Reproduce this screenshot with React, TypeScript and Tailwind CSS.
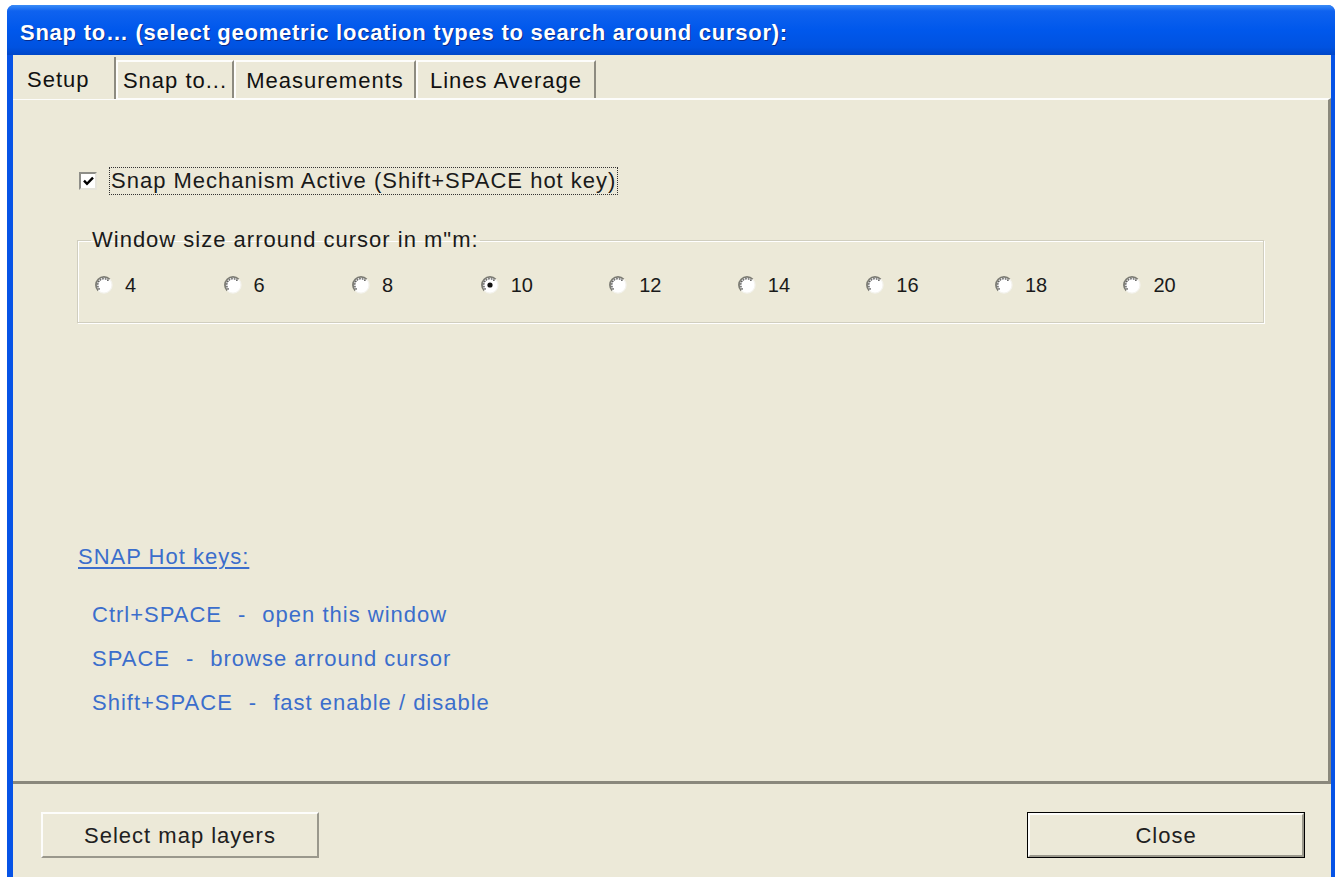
import React, { useState } from 'react';

const SIZES = [4, 6, 8, 10, 12, 14, 16, 18, 20];
const TABS: { label: string; width: string }[] = [
  { label: 'Setup', width: 'w-[103px]' },
  { label: 'Snap to...', width: 'w-[118px]' },
  { label: 'Measurements', width: 'w-[182px]' },
  { label: 'Lines Average', width: 'w-[180px]' },
];

const HOT_KEYS: [string, string][] = [
  ['Ctrl+SPACE', 'open this window'],
  ['SPACE', 'browse arround cursor'],
  ['Shift+SPACE', 'fast enable / disable'],
];

// XP-style radio bullet: white disc with a shaded rim
function Radio({ checked }: { checked: boolean }) {
  return (
    <svg width="18" height="18" viewBox="0 0 18 18" className="shrink-0">
      <circle cx="9" cy="9" r="8" fill="#ffffff" />
      <path d="M3.3 14.7 A8 8 0 0 1 14.7 3.3" fill="none" stroke="#7c7c74" strokeWidth="1.8" />
      <path d="M4.6 13.4 A6.2 6.2 0 0 1 13.4 4.6" fill="none" stroke="#2e2e2e" strokeWidth="1.1" strokeDasharray="1.6 0.9" />
      <path d="M14.7 3.3 A8 8 0 0 1 3.3 14.7" fill="none" stroke="#f4f3ee" strokeWidth="1.2" />
      {checked && <circle cx="9" cy="9" r="2.6" fill="#111" />}
    </svg>
  );
}

function Checkbox({ checked }: { checked: boolean }) {
  return (
    <span className="flex h-[18px] w-[18px] shrink-0 items-center justify-center border-2 border-[#8e8e88] border-b-[#e6e4da] border-r-[#e6e4da] bg-white">
      {checked && (
        <svg width="11" height="10" viewBox="0 0 11 10">
          <path d="M1 4.6 L4 7.8 L10 1.6" fill="none" stroke="#000" strokeWidth="2.4" />
        </svg>
      )}
    </span>
  );
}

function Button({ label, isDefault }: { label: string; isDefault?: boolean }) {
  return (
    <button className={`h-[46px] w-[278px] ${isDefault ? 'border border-black' : ''}`}>
      <span className="flex h-full w-full items-center justify-center border-2 border-t-[#fdfdfb] border-l-[#fdfdfb] border-b-[#9a988c] border-r-[#9a988c] bg-[#ece9d8] text-[22px] tracking-[1px] text-[#202020]">
        {label}
      </span>
    </button>
  );
}

export default function App() {
  const [active, setActive] = useState(true);
  const [size, setSize] = useState(10);
  const [tab, setTab] = useState(0);

  return (
    <div className="h-[877px] w-[1335px] overflow-hidden bg-white pl-[7px] pt-[5px] font-['Liberation_Sans',Arial,sans-serif]">
      <div className="flex h-[900px] flex-col overflow-hidden rounded-tl-[7px] rounded-tr-[7px] bg-[#0653e6]">
        {/* title bar */}
        <div className="flex h-[50px] shrink-0 items-center bg-[linear-gradient(180deg,#3a8cf7_0%,#0f62ef_12%,#0058ec_50%,#0052e0_85%,#0047c8_100%)] pl-[13px] pt-[4px]">
          <span className="text-[22px] font-bold tracking-[0.75px] text-white [text-shadow:1px_1px_0_#0a2a88]">
            Snap to… (select geometric location types to search around cursor):
          </span>
        </div>

        {/* client area */}
        <div className="ml-[6px] mr-[4px] flex flex-1 flex-col bg-[#ece9d8]">
          {/* tabs */}
          <div className="relative z-10 flex h-[43px] items-end">
            {TABS.map((t, i) => {
              const sel = i === tab;
              return (
                <button
                  key={t.label}
                  onClick={() => setTab(i)}
                  className={
                    sel
                      ? `mb-[-1px] flex h-[42px] items-center border-r-2 border-[#8d8b80] bg-[#ece9d8] pl-[14px] pt-[2px] text-[22px] tracking-[1px] text-[#111] ${t.width}`
                      : `flex h-[38px] items-center justify-center border-l-2 border-r-2 border-t-2 border-l-[#fdfdfb] border-t-[#fdfdfb] border-r-[#8d8b80] bg-[#ece9d8] text-[22px] tracking-[1px] text-[#111] ${t.width}`
                  }
                >
                  {t.label}
                </button>
              );
            })}
          </div>

          {/* tab page */}
          <div className="flex h-[686px] shrink-0 flex-col border-b-[3px] border-r-[3px] border-t-2 border-b-[#8a887c] border-r-[#8a887c] border-t-[#fdfdfb] text-[22px] tracking-[1px] text-[#1a1a1a]">
            <label className="ml-[66px] mt-[67px] flex items-center gap-[12px] self-start" onClick={() => setActive(!active)}>
              <Checkbox checked={active} />
              <span className="border border-dotted border-[#333] px-[1px] leading-[26px]">
                Snap Mechanism Active (Shift+SPACE hot key)
              </span>
            </label>

            <fieldset className="mx-[64px] mt-[34px] h-[94px] border border-[#d0cebf] pl-[17px] shadow-[inset_1px_1px_0_#fff,1px_1px_0_#fff]">
              <legend className="-ml-[4px] px-[1px] leading-[22px] text-[#1a1a1a]">
                Window size arround cursor in m"m:
              </legend>
              <div className="mt-[23px] grid w-[1157px] grid-cols-9">
                {SIZES.map((s) => (
                  <label key={s} className="flex items-center gap-[12px]" onClick={() => setSize(s)}>
                    <Radio checked={size === s} />
                    <span className="text-[20px] leading-[22px] tracking-normal">{s}</span>
                  </label>
                ))}
              </div>
            </fieldset>

            <div className="ml-[65px] mt-[222px] leading-[24px] text-[#3b6ecc]">
              <span className="underline underline-offset-[3px]">SNAP Hot keys:</span>
              <div className="ml-[14px] mt-[34px] flex flex-col gap-[20px]">
                {HOT_KEYS.map(([k, d]) => (
                  <div key={k} className="flex">
                    <span>{k}</span>
                    <span className="mx-[16px]">-</span>
                    <span>{d}</span>
                  </div>
                ))}
              </div>
            </div>
          </div>

          {/* buttons */}
          <div className="flex justify-between pl-[28px] pr-[26px] pt-[28px]">
            <Button label="Select map layers" />
            <Button label="Close" isDefault />
          </div>
        </div>
      </div>
    </div>
  );
}
